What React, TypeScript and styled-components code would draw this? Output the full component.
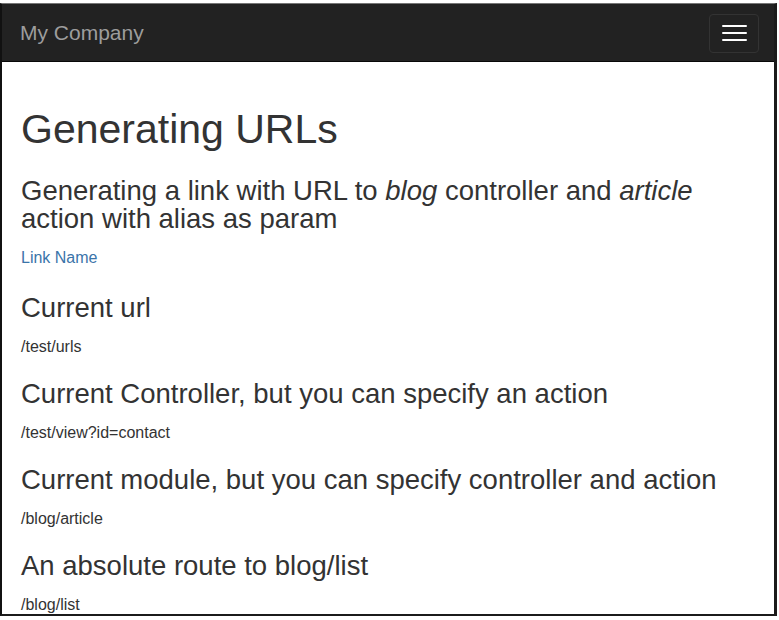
import React from "react";
import styled, { createGlobalStyle } from "styled-components";

const GlobalStyle = createGlobalStyle`
  html, body {
    margin: 0;
    padding: 0;
    background: #fff;
  }
  body {
    font-family: "Liberation Sans", Arial, Helvetica, sans-serif;
    color: #333;
  }
`;

type Example = { title: string; value: string };

const examples: Example[] = [
  { title: "Current url", value: "/test/urls" },
  { title: "Current Controller, but you can specify an action", value: "/test/view?id=contact" },
  { title: "Current module, but you can specify controller and action", value: "/blog/article" },
  { title: "An absolute route to blog/list", value: "/blog/list" },
];

const App = () => (
  <Page>
    <GlobalStyle />
    <Frame>
      <Navbar>
        <Brand href="#">My Company</Brand>
        <Toggle aria-label="Toggle navigation">
          <Bar />
          <Bar />
          <Bar />
        </Toggle>
      </Navbar>
      <Content>
        <Title>Generating URLs</Title>
        <Heading first>
          Generating a link with URL to <em>blog</em> controller and <em>article</em> action with
          alias as param
        </Heading>
        <Link href="#">Link Name</Link>
        {examples.map((ex) => (
          <React.Fragment key={ex.title}>
            <Heading>{ex.title}</Heading>
            <Value>{ex.value}</Value>
          </React.Fragment>
        ))}
      </Content>
    </Frame>
  </Page>
);

export default App;


const Page = styled.div`
  width: 779px;
  height: 620px;
  padding-top: 3px;
  box-sizing: border-box;
  overflow: hidden;
`;
const Frame = styled.div`
  width: 777px;
  height: 613px;
  box-sizing: border-box;
  border-top: 1px solid #767676;
  border-left: 2px solid #111;
  border-right: 3px solid #1b1b1b;
  border-bottom: 2px solid #1b1b1b;
  display: flex;
  flex-direction: column;
  overflow: hidden;
`;
const Navbar = styled.nav`
  height: 58px;
  flex: none;
  box-sizing: border-box;
  background: #222;
  border-bottom: 1px solid #080808;
  display: flex;
  align-items: center;
  justify-content: space-between;
  padding: 0 15px 0 18px;
`;
const Brand = styled.a`
  color: #9d9d9d;
  font-size: 21px;
  text-decoration: none;
  line-height: 24px;
`;
const Toggle = styled.button`
  width: 50px;
  height: 39px;
  margin-top: 1px;
  box-sizing: border-box;
  background: transparent;
  border: 1px solid #333;
  border-radius: 4px;
  padding: 0;
  display: flex;
  flex-direction: column;
  align-items: center;
  justify-content: center;
  gap: 5px;
`;
const Bar = styled.span`
  display: block;
  width: 25px;
  height: 2px;
  border-radius: 1px;
  background: #fff;
`;
const Content = styled.main`
  display: flex;
  flex-direction: column;
  align-items: flex-start;
  padding: 0 19px;
`;
const Title = styled.h1`
  margin: 45px 0 0;
  font-size: 41px;
  font-weight: 400;
  line-height: 44px;
`;
const Heading = styled.h3<{ first?: boolean }>`
  margin: ${(p) => (p.first ? "26px 0 15px" : "23px 0 15px")};
  font-size: 27.5px;
  font-weight: 400;
  line-height: 28px;
`;
const Link = styled.a`
  color: #3a74a9;
  font-size: 16px;
  line-height: 20px;
  text-decoration: none;
  margin-bottom: 3px;
`;
const Value = styled.div`
  font-size: 16px;
  line-height: 20px;
  color: #333;
`;
